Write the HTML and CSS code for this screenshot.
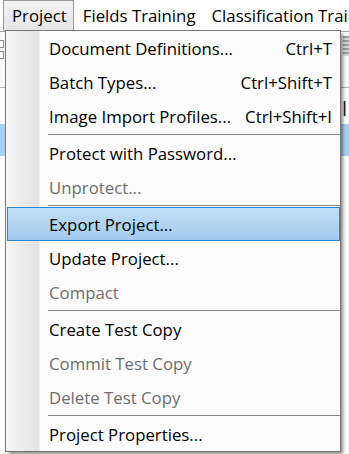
FILE: index.html
```html
<!DOCTYPE html>
<html>
<head>
<meta charset="utf-8">
<link rel="stylesheet" href="styles.css">
</head>
<body>
<div class="window">
  <div class="menubar">
    <div class="mb-item active">Project</div>
    <div class="mb-item">Fields Training</div>
    <div class="mb-item">Classification Training</div>
  </div>
  <div class="toolbar">
    <div class="tb-left"><span class="sq"></span><span class="sq"></span></div>
    <div class="tb-right"><span class="ico"></span></div>
  </div>
  <div class="panel">
    <div class="row"><span class="glyph">l</span></div>
    <div class="row selected"></div>
  </div>

  <div class="menu">
    <div class="item"><span>Document Definitions...</span><span class="sc">Ctrl+T</span></div>
    <div class="item"><span>Batch Types...</span><span class="sc">Ctrl+Shift+T</span></div>
    <div class="item"><span>Image Import Profiles...</span><span class="sc">Ctrl+Shift+I</span></div>
    <div class="sep"></div>
    <div class="item"><span>Protect with Password...</span></div>
    <div class="item disabled"><span>Unprotect...</span></div>
    <div class="sep"></div>
    <div class="item hover"><span>Export Project...</span></div>
    <div class="item"><span>Update Project...</span></div>
    <div class="item disabled"><span>Compact</span></div>
    <div class="sep"></div>
    <div class="item"><span>Create Test Copy</span></div>
    <div class="item disabled"><span>Commit Test Copy</span></div>
    <div class="item disabled"><span>Delete Test Copy</span></div>
    <div class="sep"></div>
    <div class="item"><span>Project Properties...</span></div>
  </div>
</div>
</body>
</html>
```

FILE: styles.css
```css
* { box-sizing: border-box; }
html, body { margin: 0; padding: 0; }
body {
  width: 349px;
  height: 454px;
  overflow: hidden;
  background: #fcfcfc;
  font-family: "Open Sans", "Noto Sans", sans-serif;
  font-size: 16.8px;
  color: #000;
}
.window {
  position: relative;
  width: 349px;
  height: 454px;
  overflow: hidden;
  background: #fcfcfc;
}
.menubar {
  display: flex;
  height: 31px;
  padding-left: 3px;
  background: #fff;
  white-space: nowrap;
}
.mb-item {
  height: 31px;
  line-height: 30px;
  padding: 0 6px 0 8px;
  border: 1px solid transparent;
  border-bottom: 0;
}
.mb-item.active {
  background: linear-gradient(#f2f2f2, #e6e6e6);
  border-color: #9a9a9a;
}
.toolbar {
  display: flex;
  justify-content: space-between;
  height: 57px;
  border-top: 1px solid #a0a0a0;
  border-bottom: 1px solid #b4b4b4;
  background: #f8f8f8;
}
.tb-left {
  display: flex;
  flex-direction: column;
  gap: 3px;
  padding-top: 8px;
}
.sq {
  display: block;
  width: 4px;
  height: 8px;
  border: 1px solid #8a8a8a;
  border-left: 0;
  background: #fff;
}
.tb-right { padding-top: 4px; }
.ico {
  display: block;
  width: 6px;
  height: 20px;
  background: repeating-linear-gradient(#9a9a9a 0 2px, #d6d6d6 2px 4px);
}
.panel {
  display: flex;
  flex-direction: column;
}
.row {
  height: 36px;
  display: flex;
  justify-content: flex-end;
  align-items: center;
  padding-top: 4px;
}
.glyph {
  font-size: 20px;
  color: #1a1a1a;
  margin-right: 2px;
}
.row.selected {
  height: 32px;
  background: #a9cff2;
}

/* dropdown menu */
.menu {
  position: absolute;
  left: 5px;
  top: 30px;
  width: 336px;
  height: 422px;
  border: 1px solid #777;
  background: #fcfcfc linear-gradient(to right, #f6f6f6 0, #e2e2e2 33px, #fcfcfc 34px) no-repeat 0 0 / 34px 100%;
  box-shadow: 3px 3px 3px -1px rgba(0,0,0,0.45);
}
.item {
  height: 34px;
  display: flex;
  align-items: center;
  justify-content: space-between;
  padding: 0 8px 0 43px;
  white-space: nowrap;
}
.item.disabled { color: #6d6d6d; }
.item.hover {
  margin-left: 1px;
  padding-left: 41px;
  border: 1px solid #2a86dc;
  background: linear-gradient(#c1def6, #a2caee);
}
.sc { text-align: right; }
.sep {
  height: 3px;
  padding-top: 1px;
  margin-left: 42px;
}
.sep::after {
  content: "";
  display: block;
  height: 1px;
  background: #8a8a8a;
}
```
